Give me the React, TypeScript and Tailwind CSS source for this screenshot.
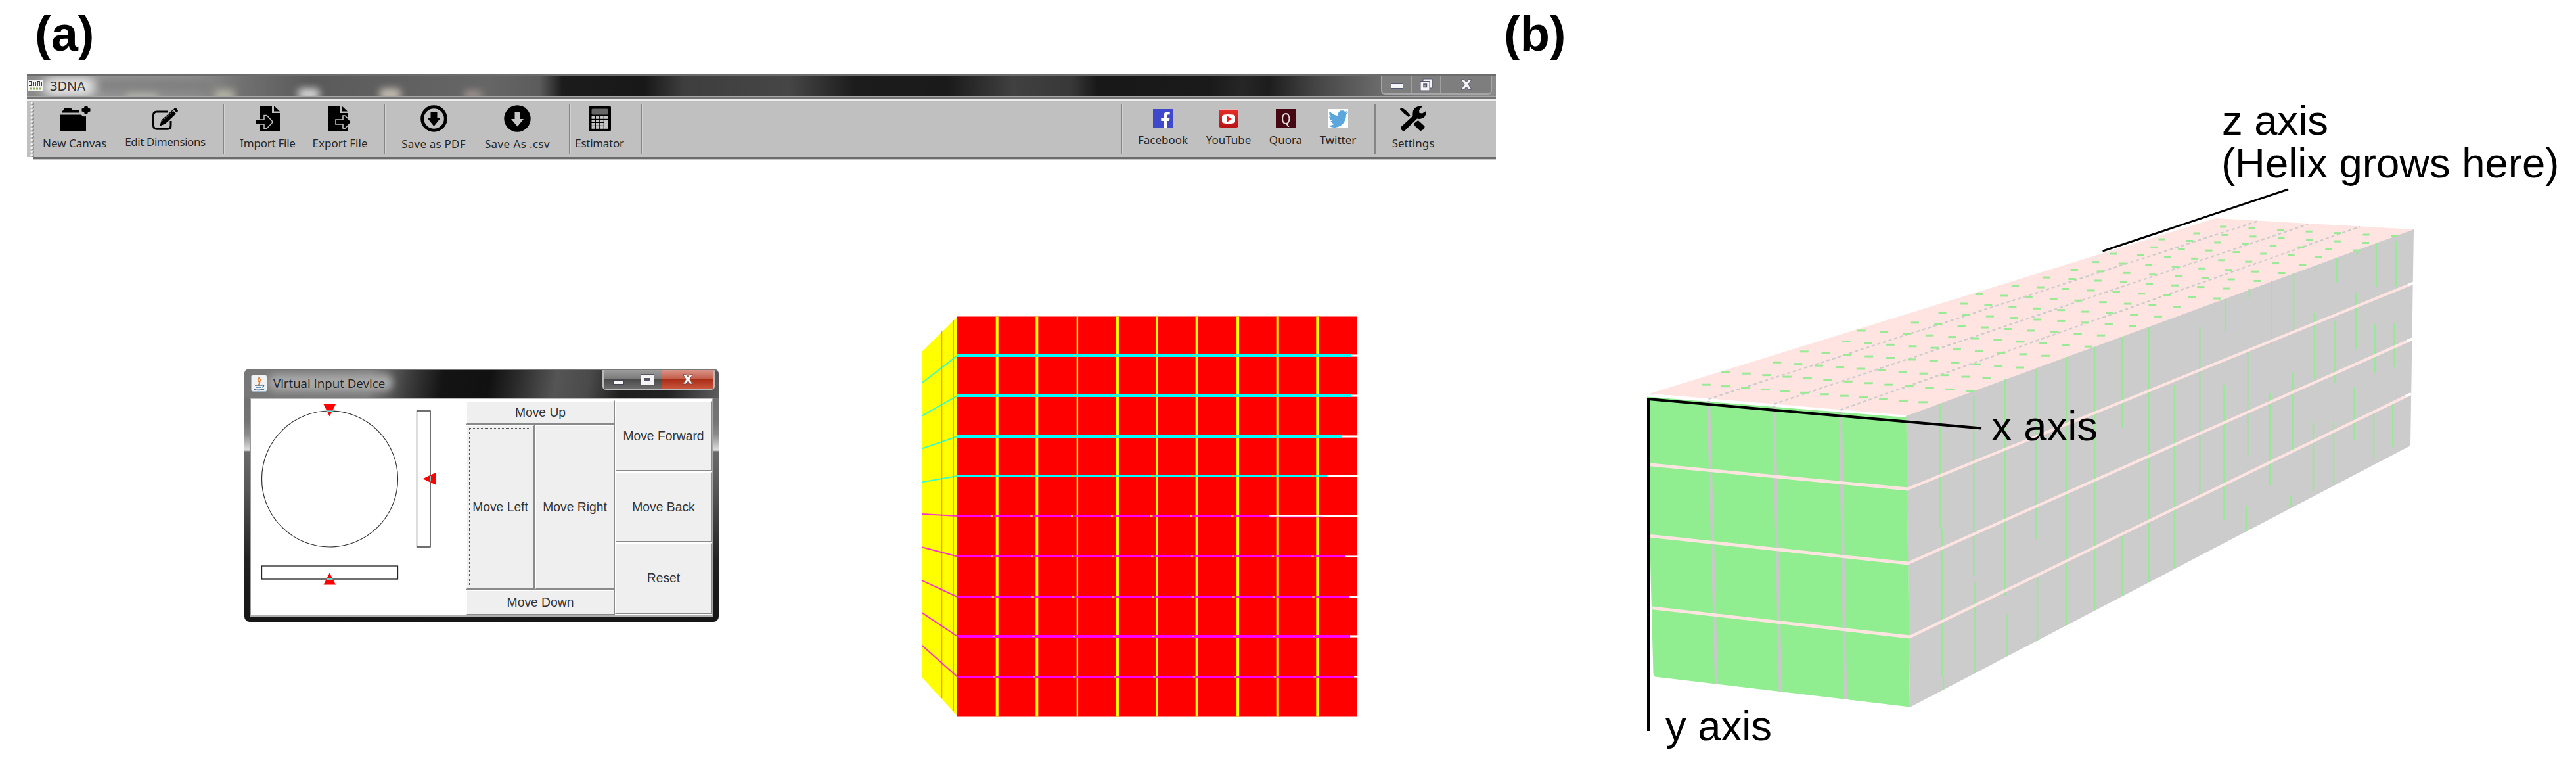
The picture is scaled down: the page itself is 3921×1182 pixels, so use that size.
import type { ReactNode } from 'react';
import { FaFacebookF, FaTwitter } from 'react-icons/fa';

interface ToolItemProps {
  label: string;
  className: string;
  labelClassName?: string;
  children: ReactNode;
}

function ToolItem({ label, className, labelClassName = 'mt-[6px]', children }: ToolItemProps) {
  return (
    <div className={`flex shrink-0 flex-col items-center ${className}`}>
      {children}
      <span className={`text-[17px] leading-[24px] whitespace-nowrap text-[#262626] ${labelClassName}`}>
        {label}
      </span>
    </div>
  );
}

function Separator({ className }: { className: string }) {
  return <div className={`mt-[4px] h-[76px] w-[3px] shrink-0 border-l-2 border-l-[#858585] bg-[#d2d2d2] ${className}`} />;
}

function FolderIcon() {
  return (
    <svg width="46" height="39" viewBox="0 0 46 39" className="ml-[3px]">
      <path d="M2 10.500V7.500H4L5.500 4.500Q6 3.500 7 3.500H16L18.500 6.500H29V10.500Z" />
      <path d="M0 13.500H31.500Q34 17 39 16V37.500Q39 39 37.500 39H1.500Q0 39 0 37.500Z" />
      <path d="M37 0H41L42 3L45.500 4.500V8.500L42 9.500L41 13H37L36 9.500L32.500 8.500V4.500L36 3Z" />
    </svg>
  );
}

function EditIcon() {
  return (
    <svg width="39" height="34" viewBox="0 0 39 34">
      <path
        d="M24 6H7Q1.500 6 1.500 11V27Q1.500 32.200 7 32.200H23Q28 32.200 28 27V20"
        fill="none"
        stroke="#000"
        strokeWidth="3"
      />
      <path d="M11 28L14 18.500L30.500 3.500L36 9L20 24Z" />
      <path d="M32 2.500L34 .5Q35.500 0 37 1.500L38.500 3.500Q39.300 5 38 6.500L37 7.500Z" />
      <path d="M15.500 19.500L31 5" stroke="#777" strokeWidth="1" />
    </svg>
  );
}

function ImportIcon() {
  return (
    <svg width="36" height="39" viewBox="0 0 36 39">
      <path d="M5 0H24V11H36V39H5Z" />
      <path d="M27 0L36 8.500H27Z" />
      <path
        d="M-1 21H12V14.500L16 14.500L25.500 24.500L16 34.500L12 34.500V28H-1"
        fill="#000"
        stroke="#c0c0c0"
        strokeWidth="1.500"
      />
      <path d="M0 22H14V17L21.500 24.500L14 31.500V27H0Z" />
    </svg>
  );
}

function ExportIcon() {
  return (
    <svg width="37" height="39" viewBox="0 0 37 39">
      <path d="M0 0H18V11H30V39H0Z" />
      <path d="M21 0L30 8.500H21Z" />
      <path
        d="M12 21H23V15L26 15L36 24.500L26 34.500L23 34V28H12Z"
        fill="#000"
        stroke="#c0c0c0"
        strokeWidth="1.600"
      />
    </svg>
  );
}

function PdfIcon() {
  return (
    <svg width="41" height="41" viewBox="0 0 41 41">
      <circle cx="20.500" cy="20.500" r="17.800" fill="none" stroke="#000" strokeWidth="5" />
      <path d="M15.500 11H25.500V19H31L20.500 32L10 19H15.500Z" />
    </svg>
  );
}

function CsvIcon() {
  return (
    <svg width="41" height="41" viewBox="0 0 41 41">
      <circle cx="20.500" cy="20.500" r="20.200" />
      <path d="M16.500 10H24.500V21H30L20.500 32.500L11 21H16.500Z" fill="#c6c6c6" />
    </svg>
  );
}

function CalculatorIcon() {
  return (
    <svg width="34" height="39" viewBox="0 0 34 39">
      <rect width="34" height="39" rx="3" />
      <rect x="4.500" y="4.500" width="25" height="9" rx="1.500" fill="#666" />
      {[16, 21, 26, 31].map((y, row) =>
        [4.5, 11, 17.5, 24].map((x, col) =>
          row > 1 && col === 3 ? null : (
            <rect key={`${x}-${y}`} x={x} y={y} width="5.200" height="3.800" fill="#c4c4c4" />
          )
        )
      )}
      <rect x="24" y="21" width="5.200" height="13.800" fill="#c4c4c4" />
    </svg>
  );
}

function YouTubeIcon() {
  return (
    <svg width="30" height="29" viewBox="0 0 30 29">
      <defs>
        <linearGradient id="yt" x1="0" y1="0" x2="0" y2="1">
          <stop offset="0" stopColor="#e52d27" />
          <stop offset="1" stopColor="#b81217" />
        </linearGradient>
      </defs>
      <rect width="30" height="29" fill="#e9b9b9" />
      <rect y="1" width="30" height="27" rx="3.500" fill="url(#yt)" />
      <path d="M8 8.500Q15 7.500 22 8.500Q25 9 25 12V18Q25 21 22 21.500Q15 22.500 8 21.500Q5 21 5 18V12Q5 9 8 8.500Z" fill="#fff" />
      <path d="M13 10.500L20 15L13 19.500Z" fill="#f01818" />
    </svg>
  );
}

function SettingsIcon() {
  return (
    <svg width="40" height="39" viewBox="0 0 40 39">
      <path d="M4 38Q0 36 1.500 32L19.500 15.500Q18.500 6 24 2.500Q29 -.5 34 1L29 6.500L29.500 11L34 11.500L39.500 8Q40 14 36.500 17.500Q32 21 26 19.500L7.500 37.500Q6 39 4 38Z" />
      <path d="M0 5.500Q0 2.500 4 3.500L10 8L15.500 14.500L13 17L6 11.500Z" />
      <path d="M21 27L27.500 22L37.500 31Q38 34 35.500 36L31 38.500L22.500 30.500Z" />
    </svg>
  );
}

function Toolbar() {
  return (
    <div className="flex h-[85px] items-start bg-[#c0c0c0]">
      <svg width="12" height="85" viewBox="0 0 12 85" className="shrink-0">
        {Array.from({ length: 15 }, (_, i) => (
          <g key={i}>
            <circle cx="8.500" cy={3.500 + i * 5.700} r="2" fill="#8f8f8f" />
            <circle cx="7.200" cy={2.500 + i * 5.700} r="1.800" fill="#f4f4f4" />
          </g>
        ))}
      </svg>
      <ToolItem label="New Canvas" className="ml-[11px] w-[99px] pt-[7px]">
        <FolderIcon />
      </ToolItem>
      <ToolItem label="Edit Dimensions" className="ml-[28px] w-[121px] pt-[10px]" labelClassName="mt-[6px] tracking-[-0.45px]">
        <EditIcon />
      </ToolItem>
      <Separator className="ml-[27px]" />
      <ToolItem label="Import File" className="ml-[24px] w-[83px] pt-[7px]" labelClassName="mt-[6px] tracking-[-0.25px]">
        <ImportIcon />
      </ToolItem>
      <ToolItem label="Export File" className="ml-[27px] w-[83px] pt-[7px]">
        <ExportIcon />
      </ToolItem>
      <Separator className="ml-[25px]" />
      <ToolItem label="Save as PDF" className="ml-[24px] w-[98px] pt-[6px]" labelClassName="mt-[6px] tracking-[0.2px]">
        <PdfIcon />
      </ToolItem>
      <ToolItem label="Save As .csv" className="ml-[28px] w-[101px] pt-[6px]" labelClassName="mt-[6px] tracking-[0.4px]">
        <CsvIcon />
      </ToolItem>
      <Separator className="ml-[28px]" />
      <ToolItem label="Estimator" className="ml-[7px] w-[73px] pt-[7px]" labelClassName="mt-[6px] tracking-[-0.3px]">
        <CalculatorIcon />
      </ToolItem>
      <Separator className="ml-[26px]" />
      <Separator className="ml-[728px]" />
      <ToolItem label="Facebook" className="ml-[23px] w-[76px] pt-[12px]">
        <div className="flex h-[29px] w-[30px] items-end justify-end bg-[#4048cc]">
          <FaFacebookF className="mr-[3px] h-[25px] w-[16px] text-white" />
        </div>
      </ToolItem>
      <ToolItem label="YouTube" className="ml-[28px] w-[68px] pt-[12px]">
        <YouTubeIcon />
      </ToolItem>
      <ToolItem label="Quora" className="ml-[28px] w-[50px] pt-[12px]">
        <div className="flex h-[29px] w-[30px] items-center justify-center bg-[#450812] text-[24px] leading-none text-[#e4dcdc]">
          <span className="-mt-[2px] scale-x-75">Q</span>
        </div>
      </ToolItem>
      <ToolItem label="Twitter" className="ml-[27px] w-[55px] pt-[12px]">
        <div className="flex h-[29px] w-[30px] items-center justify-center bg-white">
          <FaTwitter className="h-[32px] w-[30px] shrink-0 text-[#5ba7dc]" preserveAspectRatio="none" />
        </div>
      </ToolItem>
      <Separator className="ml-[28px]" />
      <ToolItem label="Settings" className="ml-[24px] w-[64px] pt-[7px]">
        <SettingsIcon />
      </ToolItem>
    </div>
  );
}

function MainWindow() {
  return (
    <div className="ml-[41px] flex h-[131px] w-[2236px] flex-col font-['Noto_Sans',sans-serif]">
      {/* Title bar */}
      <div className="relative flex h-[33px] items-start justify-between overflow-hidden border-t-2 border-t-[#6c6c6c] bg-[linear-gradient(90deg,#8a8a8a_0,#949494_120px,#8c8c8c_260px,#707070_330px,#5a5a5a_430px,#606060_560px,#666_700px,#5c5c5c_780px,#1c1c1c_815px,#181818_940px,#3e3e3e_1000px,#464646_1160px,#1c1c1c_1260px,#1a1a1a_1400px,#404040_1500px,#383838_1590px,#181818_1630px,#1a1a1a_1800px,#262626_1850px,#1d1d1d_1890px,#444_1960px,#6b6b6b_2060px,#8a8a8a_2200px)]">
        <div className="absolute top-[2px] left-[24px] h-[30px] w-[80px] rounded-full bg-[#e6e6e6] blur-[8px]" />
        <div className="absolute top-[24px] left-[150px] h-[14px] w-[50px] rounded-full bg-[#c4c4b8] opacity-70 blur-[6px]" />
        <div className="absolute top-[22px] left-[285px] h-[16px] w-[32px] rounded-full bg-[#c4c4b0] opacity-80 blur-[6px]" />
        <div className="absolute top-[20px] left-[412px] h-[16px] w-[34px] rounded-full bg-[#e8e8e8] opacity-90 blur-[6px]" />
        <div className="absolute top-[20px] left-[536px] h-[16px] w-[34px] rounded-full bg-[#d4ccc0] opacity-90 blur-[6px]" />
        <div className="absolute top-[23px] left-[665px] h-[12px] w-[28px] rounded-full bg-[#b4a49c] opacity-80 blur-[6px]" />
        <div className="absolute top-[6px] left-[110px] h-[18px] w-[170px] rounded-full bg-[#777] opacity-60 blur-[6px]" />
        <div className="relative flex h-full items-center">
          <svg width="22" height="17" viewBox="0 0 22 17" className="ml-[2px]">
            <rect width="22" height="17" fill="#f2f2f2" />
            <path d="M1 2H5V8H1M8 2V9M11 2V9M14 2V9M14 2H17V9M20 2V9" fill="none" stroke="#333" strokeWidth="1.800" />
            <path d="M2 13H20" stroke="#8fb35a" strokeWidth="3" strokeDasharray="3 2" />
          </svg>
          <span className="ml-[11px] text-[20px] leading-[30px] text-[#333]">3DNA</span>
        </div>
        <div className="relative mr-[6px] flex h-[29px] w-[169px] rounded-b-[6px] border-2 border-t-0 border-[#a6a6a6] bg-[#7e7e7e]">
          <div className="flex w-[46px] items-center justify-center border-r-2 border-[#a0a0a0]">
            <div className="mt-[4px] h-[8px] w-[19px] border border-[#555770] bg-[#f4f4f4]" />
          </div>
          <div className="flex w-[44px] items-center justify-center border-r-2 border-[#a0a0a0]">
            <svg width="20" height="20" viewBox="0 0 20 20">
              <path d="M5 1H19V15H15V5H5Z" fill="#f4f4f4" stroke="#555770" />
              <path d="M1 4.500H15V19H1Z" fill="#f4f4f4" stroke="#555770" />
              <rect x="6" y="9" width="4.500" height="4.500" fill="#999" stroke="#555770" strokeWidth="1.500" />
            </svg>
          </div>
          <div className="flex flex-1 items-center justify-center">
            <svg width="18" height="17" viewBox="0 0 18 17">
              <path
                d="M1 1H6L9 5L12 1H17L12 8.500L17 16H12L9 12L6 16H1L6 8.500Z"
                fill="#f4f4f4"
                stroke="#555770"
              />
            </svg>
          </div>
        </div>
      </div>
      <div className="h-[2px] bg-[#a8a8a8]" />
      <div className="h-[3px] bg-[#747474]" />
      <div className="h-[3px] bg-[#eee]" />
      <Toolbar />
      <div className="ml-[9px] h-[3px] bg-[#6b6b6b]" />
      <div className="ml-[9px] h-[2px] bg-[#c8c8c8]" />
    </div>
  );
}

function JavaIcon() {
  return (
    <svg width="25" height="26" viewBox="0 0 25 26">
      <rect x=".5" y=".5" width="24" height="25" rx="3" fill="#eef2f5" stroke="#a5b4c0" />
      <path d="M13 4Q9 8 12 10.500T11 15M16 7Q12 9.500 14 13" fill="none" stroke="#ea7a2c" strokeWidth="1.800" />
      <path d="M6 16H17M8 19H16M5 22.500Q12 24.500 20 22M17 15.500Q22 16 17 19" fill="none" stroke="#3e7299" strokeWidth="1.600" />
    </svg>
  );
}

function PadButton({ label, className, focused = false }: { label: string; className: string; focused?: boolean }) {
  return (
    <button
      className={`relative flex shrink-0 items-center justify-center border-2 border-t-white border-r-[#8a8a8a] border-b-[#8a8a8a] border-l-white bg-[#efefef] pt-px text-[19.300px] leading-none whitespace-nowrap text-[#333] ${className}`}
    >
      {label}
      {focused && <span className="absolute inset-[3px] border border-dotted border-[#555]" />}
    </button>
  );
}

function VirtualInputDevice() {
  return (
    <div className="mt-[317px] ml-[372px] flex h-[385px] w-[722px] shrink-0 flex-col rounded-[8px] bg-[linear-gradient(180deg,#6e6e6e_0,#747474_80px,#8a8a8a_100px,#d8d8d8_122px,#dcdcdc_124px,#6a6a6a_126px,#585858_180px,#222_290px,#1a1a1a_340px,#161616_385px)] font-['Liberation_Sans',Arial,sans-serif]">
      {/* Title bar */}
      <div className="relative flex h-[44px] shrink-0 items-start justify-between overflow-hidden rounded-t-[8px] border-t-2 border-t-[#777] bg-[linear-gradient(100deg,#777_0,#7c7c7c_190px,#3c3c3c_250px,#141414_300px,#111_370px,#2a2a2a_410px,#555_470px,#4a4a4a_520px,#1d1d1d_570px,#222_640px,#666_730px)]">
        <div className="absolute top-[6px] left-[36px] h-[26px] w-[190px] rounded-full bg-[#a8a8a8] blur-[6px]" />
        <div className="relative flex pt-[7px] pl-[10px]">
          <JavaIcon />
          <span className="ml-[9px] font-['Open_Sans','Noto_Sans',sans-serif] text-[18.700px] leading-[25px] whitespace-nowrap text-[#222]">
            Virtual Input Device
          </span>
        </div>
        <div className="relative mr-[6px] flex h-[30px] w-[171px] overflow-hidden rounded-b-[5px] border-2 border-t-0 border-[#b9b9b9]">
          <div className="flex w-[45px] items-center justify-center border-r border-[#bbb] bg-[linear-gradient(#9d9d9d,#7c7c7c_45%,#484848_48%,#6c6c6c)]">
            <div className="mt-[8px] h-[7px] w-[17px] border border-[#445] bg-[#f6f6f6]" />
          </div>
          <div className="flex w-[44px] items-center justify-center border-r border-[#bbb] bg-[linear-gradient(#9d9d9d,#7c7c7c_45%,#484848_48%,#6c6c6c)]">
            <div className="h-[15px] w-[19px] border-[5px] border-[#f4f4f4] bg-[#556] outline outline-[#556]" />
          </div>
          <div className="flex flex-1 items-center justify-center bg-[linear-gradient(#d99488,#c4604e_45%,#a92a14_48%,#c8563c)]">
            <svg width="18" height="16" viewBox="0 0 18 17">
              <path d="M1 1H6L9 5L12 1H17L12 8.500L17 16H12L9 12L6 16H1L6 8.500Z" fill="#f8f8f8" stroke="#6a4a50" />
            </svg>
          </div>
        </div>
      </div>

      {/* Content */}
      <div className="mx-[8px] flex h-[333px] border-2 border-t-[#bdbdbd] border-r-[#a8a8a8] border-b-[#b0b0b0] border-l-[#999] bg-white">
        <svg width="327" height="329" viewBox="382 607 327 329" className="shrink-0">
          <circle cx="502" cy="728.500" r="103.500" fill="none" stroke="#333" strokeWidth="1.200" />
          <rect x="634.500" y="625" width="20.500" height="207" fill="none" stroke="#222" strokeWidth="1.300" />
          <rect x="398.500" y="861" width="207" height="20" fill="none" stroke="#222" strokeWidth="1.300" />
          <path d="M492 614H511.500L501.700 633.500Z" fill="#f00" />
          <path d="M497 625.300H506.500" stroke="#5ee" strokeWidth="1.800" />
          <path d="M663 719V737.500L643.500 728.200Z" fill="#f00" />
          <path d="M655 724V732.500" stroke="#5ee" strokeWidth="1.800" />
          <path d="M492.500 889.500H511L501.700 871.500Z" fill="#f00" />
          <path d="M497 881H506.500" stroke="#5ee" strokeWidth="1.800" />
        </svg>
        <div className="flex w-[227px] shrink-0 flex-col">
          <PadButton label="Move Up" className="mt-[2px] h-[37px]" />
          <div className="flex h-[251px]">
            <PadButton label="Move Left" className="w-[105px]" focused />
            <PadButton label="Move Right" className="w-[122px]" />
          </div>
          <PadButton label="Move Down" className="h-[39px]" />
        </div>
        <div className="flex flex-1 flex-col">
          <PadButton label="Move Forward" className="mt-[2px] h-[108px]" />
          <PadButton label="Move Back" className="h-[108px]" />
          <PadButton label="Reset" className="h-[109px]" />
        </div>
      </div>
    </div>
  );
}

const COLUMNS = [1517.7, 1578.3, 1639.9, 1700.9, 1761, 1821.7, 1884.1, 1944.7, 2005.3];

// y on the front face, y on the far left edge, stroke width, where the colour stops
const ROWS = [
  { y: 541, left: 582.7, width: 4, end: 2056 },
  { y: 602, left: 632.9, width: 4, end: 2056 },
  { y: 664, left: 682.6, width: 4, end: 2042 },
  { y: 724, left: 733.6, width: 4, end: 2020 },
  { y: 785, left: 782, width: 3.4, end: 1932 },
  { y: 846.5, left: 832.3, width: 3, end: 2047 },
  { y: 908, left: 882.9, width: 4, end: 2053 },
  { y: 968, left: 931.8, width: 4, end: 2055 },
  { y: 1029.5, left: 981.6, width: 3, end: 2061 },
];

function CanvasCube() {
  return (
    <svg width="670" height="620" viewBox="1400 475 670 620" className="mt-[231px] ml-[306px] shrink-0">
      <path d="M1403 535.500L1457.500 481.500V1089.500L1403 1030Z" fill="#ff0" />
      <rect x="1457" y="481.500" width="609" height="608" fill="#f00" />
      <path d="M1433.300 504V1062M1451 487V1082" stroke="#ff9f00" strokeWidth="2" />
      {COLUMNS.map((x, i) => (
        <path key={x} d={`M${x} 481.500V1089.500`} stroke="#ff0" strokeWidth={i === 2 ? 2.4 : 4} />
      ))}
      {ROWS.map(({ y, left, width, end }, i) => (
        <g key={y} stroke={i < 4 ? '#0ff' : '#f0f'}>
          <path d={`M${end} ${y}H2066`} stroke="#fff" strokeWidth={width - 0.8} />
          <path d={`M1457 ${y}H${end}`} strokeWidth={width} />
          <path d={`M1403 ${left}L1457 ${y}`} strokeOpacity=".8" strokeWidth="2" />
          {COLUMNS.filter((x) => x < end).map((x) => (
            <path key={x} d={`M${x - 6 + Math.abs(i - 4) - 4} ${y}h3.500`} stroke="#e8d000" strokeWidth="2" />
          ))}
        </g>
      ))}
      <path d="M1932 786.500H2014" stroke="#f0f" strokeWidth="1.500" />
    </svg>
  );
}

// Slices along the z axis: right-edge x and the x of the last dash before that edge
const SLICES = [
  [2953, 2927],
  [3004, 2999],
  [3052, 3024],
  [3098, 3074.5],
  [3145, 3113.5],
  [3188, 3179],
  [3230, 3198],
  [3271, 3246],
  [3310, 3285],
  [3348, 3314],
  [3387, 3375],
  [3424, 3389],
  [3458, 3436],
  [3491, 3473],
  [3525, 3505],
  [3557, 3529],
  [3588, 3587],
  [3617, 3601],
  [3646.7, 3645],
];

// x, top, bottom of each visible stroke on the side face
const SIDE_STROKES = [
  [2953.5, 614, 805],
  [2956, 805, 1030],
  [2958, 1030, 1049],
  [3004.3, 603, 876],
  [3006.5, 886, 1024],
  [3052, 577, 907],
  [3055.5, 934, 998],
  [3098.6, 561, 820],
  [3101, 877, 975],
  [3145, 543, 951],
  [3188, 528, 928],
  [3230, 512, 651],
  [3230, 813, 907],
  [3271, 497, 885],
  [3309.8, 585, 864],
  [3348.3, 498, 758],
  [3387, 455, 503],
  [3385, 585, 791],
  [3423.7, 440, 452],
  [3421.3, 535, 694],
  [3419, 769, 808],
  [3457.7, 428, 527],
  [3455, 598, 738],
  [3491, 416, 502],
  [3489.3, 568, 689],
  [3486.6, 755, 772],
  [3525, 404, 413],
  [3523, 476, 577],
  [3521, 643, 747],
  [3557, 392, 430],
  [3554.4, 488, 583],
  [3552, 643, 736],
  [3588, 380, 388],
  [3586, 446, 531],
  [3583.6, 588, 670],
  [3617, 370, 437],
  [3615, 493, 568],
  [3613, 627, 699],
  [3646.7, 367, 437],
  [3644, 491, 558],
  [3642, 612, 680],
];

function topDashes() {
  const dashes: { x: number; y: number; length: number }[] = [];
  SLICES.forEach(([edge, last]) => {
    const t = (edge - 2901) / 773;
    const start = 2507 + 866 * t;
    const step = 29 + 15 * t;
    const slope = 2.42 / step;
    const edgeY = 633 - (edge - 2901) * 0.3667;
    for (let x = last; x > start + 4; x -= step) {
      dashes.push({ x, y: edgeY - (edge - x) * slope, length: 14 - 4 * t });
    }
  });
  return dashes;
}

function AxisDiagram() {
  return (
    <svg
      width="1641"
      height="1069"
      viewBox="2280 113 1641 1069"
      className="font-['Liberation_Sans',Arial,sans-serif] text-[63.400px]"
    >
      <path d="M2507 600L3373 332L3674 349L2901 634Z" fill="#ffe4e1" />
      <path d="M2901 633L3674 349L3669 678L2907 1076Z" fill="#ccc" />
      <path d="M2507 603.500L2901.500 635L2907 1075.500L2519 1029.500L2516.500 1025L2507 660Z" fill="#90ee90" />
      <path d="M2518 600.500L2901 633" stroke="#fff" strokeWidth="2.600" />

      {/* Top face */}
      <path
        d="M2600.500 607L3438 336M2700 614.800L3513 341M2801.400 623.600L3592 345"
        stroke="#ccc"
        strokeWidth="2.400"
        strokeDasharray="5 4"
      />
      {topDashes().map(({ x, y, length }, i) => (
        <path key={i} d={`M${x - length / 2} ${y}h${length}`} stroke="#98ea94" strokeWidth="3" />
      ))}

      {/* Front face */}
      <path
        d="M2600.500 610L2612.700 1041M2700 618L2710 1052M2801.400 627L2809 1064"
        stroke="#c9c9c9"
        strokeWidth="4.800"
      />
      <path
        d="M2512 706.900L2904 744M2512 815.300L2904 857M2515 924.800L2907 969"
        stroke="#ffe4e1"
        strokeWidth="4.800"
      />

      {/* Side face */}
      {SIDE_STROKES.map(([x, y1, y2]) => (
        <path key={`${x}-${y1}`} d={`M${x} ${y1}V${y2}`} stroke="#98e898" strokeWidth="2.500" />
      ))}
      <path d="M2903 744L3674 430.500M2903 857.500L3672 515.500M2906 969.500L3669 599.500" stroke="#ffe4e1" strokeWidth="4.200" />
      <path d="M3666 433.500L3675 430M3664 518.500L3673 515M3662 602.500L3670 599" stroke="#fff" strokeWidth="4" />

      {/* Axes */}
      <path d="M2509 605V1112" stroke="#000" strokeWidth="4" />
      <path d="M2509 607L3016 651.500" stroke="#000" strokeWidth="4" />
      <path d="M3200.500 382L3483 288" stroke="#000" strokeWidth="3" />
      <text x="3382" y="205">z axis</text>
      <text x="3381" y="270">(Helix grows here)</text>
      <text x="3031" y="669.500">x axis</text>
      <text x="2535" y="1126">y axis</text>
    </svg>
  );
}

function PanelTitle({ children, className }: { children: ReactNode; className: string }) {
  return (
    <h2 className={`h-[113px] pt-px font-['Liberation_Sans',Arial,sans-serif] text-[74px] leading-[101px] font-bold text-black ${className}`}>
      {children}
    </h2>
  );
}

export default function App() {
  return (
    <main className="flex h-[1182px] w-[3921px] overflow-hidden bg-white">
      <section className="w-[2280px] shrink-0">
        <PanelTitle className="pl-[53px]">(a)</PanelTitle>
        <MainWindow />
        <div className="flex items-start">
          <VirtualInputDevice />
          <CanvasCube />
        </div>
      </section>
      <section className="w-[1641px] shrink-0">
        <PanelTitle className="pl-[9px]">(b)</PanelTitle>
        <AxisDiagram />
      </section>
    </main>
  );
}
